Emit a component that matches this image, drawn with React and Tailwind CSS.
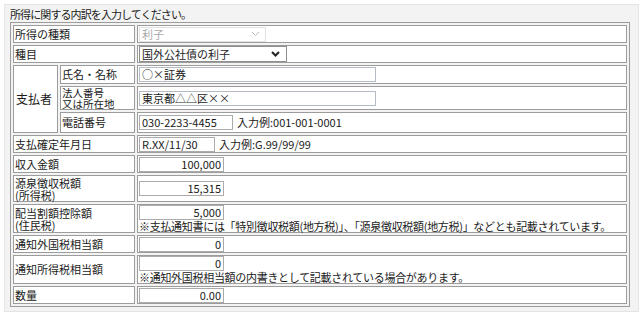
import React from 'react'

const font = { fontFamily: '"Noto Sans CJK JP", "Noto Sans", sans-serif' }

function Chevron({ light }) {
    return (
        <svg width="9" height="6" viewBox="0 0 9 6" className="shrink-0">
            <path d="M1 1 L4.5 4.5 L8 1" fill="none" stroke={light ? '#b8b8b8' : '#222'} strokeWidth={light ? 1 : 2} />
        </svg>
    )
}

function Box({ children, w = 'w-[85px]', right = false, className = '' }) {
    return (
        <div className={`h-[15px] ${w} border border-[#ababab] bg-white px-[2px] flex items-center leading-none ${right ? 'justify-end' : ''} ${className}`}>
            {children}
        </div>
    )
}

function Label({ children, rowSpan, colSpan, h }) {
    return (
        <td rowSpan={rowSpan} colSpan={colSpan} className={`border border-[#9c9c9c] bg-white px-[1px] align-middle ${h || ''}`}>
            {children}
        </td>
    )
}

function Val({ children, h }) {
    return (
        <td className={`border border-[#9c9c9c] bg-white px-[1px] align-middle ${h || ''}`}>
            {children}
        </td>
    )
}

export default function App() {
    return (
        <div className="w-[643px] h-[317px] bg-white pt-[4px] px-[4px] text-[11px] text-[#1a1a1a]" style={font}>
            <div className="h-[308px] bg-[#f3f3f3] border border-[#e4e4e4] px-[5px]">
                <div className="h-[17px] pt-[3px] leading-[13px] tracking-[-0.9px]">所得に関する内訳を入力してください。</div>
                <table className="w-[620px] border-separate border-spacing-[2px] border border-[#9c9c9c] bg-[#f3f3f3] leading-[13px]">
                    <colgroup>
                        <col className="w-[45px]" />
                        <col className="w-[75px]" />
                        <col />
                    </colgroup>
                    <tbody>
                        <tr>
                            <Label colSpan={2} h="h-[18px]">所得の種類</Label>
                            <Val>
                                <div className="h-[15px] w-[127px] border border-[#e2e2e2] bg-white flex items-center justify-between pl-[2px] pr-[5px] text-[#a8a8a8]">
                                    <span>利子</span>
                                    <Chevron light />
                                </div>
                            </Val>
                        </tr>
                        <tr>
                            <Label colSpan={2} h="h-[18px]">種目</Label>
                            <Val>
                                <div className="h-[16px] w-[148px] border border-[#8f8f8f] bg-white flex items-center justify-between pl-[2px] pr-[6px]">
                                    <span>国外公社債の利子</span>
                                    <Chevron />
                                </div>
                            </Val>
                        </tr>
                        <tr>
                            <Label rowSpan={3}>
                                <span className="text-[12px] pl-[1px]">支払者</span>
                            </Label>
                            <Label h="h-[19px]">氏名・名称</Label>
                            <Val>
                                <Box w="w-[237px]" className="border-[#b5bcc4]">○×証券</Box>
                            </Val>
                        </tr>
                        <tr>
                            <Label h="h-[24px]">
                                <div className="text-[10.5px] leading-[11px]">法人番号<br />又は所在地</div>
                            </Label>
                            <Val>
                                <Box w="w-[237px]" className="border-[#b5bcc4]">東京都△△区××</Box>
                            </Val>
                        </tr>
                        <tr>
                            <Label h="h-[21px]">電話番号</Label>
                            <Val>
                                <div className="flex items-center gap-[4px]">
                                    <Box w="w-[94px]">030-2233-4455</Box>
                                    <span>入力例:001-001-0001</span>
                                </div>
                            </Val>
                        </tr>
                        <tr>
                            <Label colSpan={2} h="h-[18px]">支払確定年月日</Label>
                            <Val>
                                <div className="flex items-center gap-[4px]">
                                    <Box w="w-[76px]">R.XX/11/30</Box>
                                    <span>入力例:G.99/99/99</span>
                                </div>
                            </Val>
                        </tr>
                        <tr>
                            <Label colSpan={2} h="h-[18px]">収入金額</Label>
                            <Val><Box right>100,000</Box></Val>
                        </tr>
                        <tr>
                            <Label colSpan={2} h="h-[27px]">
                                <div className="leading-[12px]">源泉徴収税額<br />(所得税)</div>
                            </Label>
                            <Val><Box right>15,315</Box></Val>
                        </tr>
                        <tr>
                            <Label colSpan={2} h="h-[29px]">
                                <div className="leading-[12px]">配当割額控除額<br />(住民税)</div>
                            </Label>
                            <Val>
                                <Box right>5,000</Box>
                                <div className="leading-[12px] tracking-[-0.3px]">※支払通知書には「特別徴収税額(地方税)」、「源泉徴収税額(地方税)」などとも記載されています。</div>
                            </Val>
                        </tr>
                        <tr>
                            <Label colSpan={2} h="h-[18px]">通知外国税相当額</Label>
                            <Val><Box right>0</Box></Val>
                        </tr>
                        <tr>
                            <Label colSpan={2} h="h-[29px]">通知所得税相当額</Label>
                            <Val>
                                <Box right>0</Box>
                                <div className="leading-[12px] tracking-[-0.3px]">※通知外国税相当額の内書きとして記載されている場合があります。</div>
                            </Val>
                        </tr>
                        <tr>
                            <Label colSpan={2} h="h-[18px]">数量</Label>
                            <Val><Box right>0.00</Box></Val>
                        </tr>
                    </tbody>
                </table>
            </div>
        </div>
    )
}
